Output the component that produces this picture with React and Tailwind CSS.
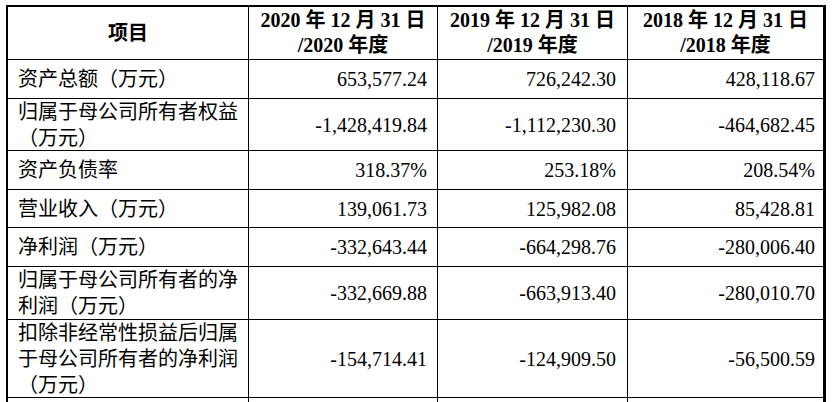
import React from "react";

const ROWS = [
  { label: ["资产总额（万元）"], h: "h-[39px]", values: ["653,577.24", "726,242.30", "428,118.67"] },
  { label: ["归属于母公司所有者权益", "（万元）"], h: "h-[52px]", values: ["-1,428,419.84", "-1,112,230.30", "-464,682.45"] },
  { label: ["资产负债率"], h: "h-[39px]", values: ["318.37%", "253.18%", "208.54%"] },
  { label: ["营业收入（万元）"], h: "h-[38px]", values: ["139,061.73", "125,982.08", "85,428.81"] },
  { label: ["净利润（万元）"], h: "h-[39px]", values: ["-332,643.44", "-664,298.76", "-280,006.40"] },
  { label: ["归属于母公司所有者的净", "利润（万元）"], h: "h-[53px]", values: ["-332,669.88", "-663,913.40", "-280,010.70"] },
  {
    label: ["扣除非经常性损益后归属", "于母公司所有者的净利润", "（万元）"],
    h: "h-[78px]",
    values: ["-154,714.41", "-124,909.50", "-56,500.59"],
  },
];

const YEARS = ["2020", "2019", "2018"];
const PAD = ["pr-[10px]", "pr-[11px]", "pr-[8px]"];

export default function App() {
  return (
    <div
      className="h-[402px] w-[832px] overflow-hidden bg-white pl-[6px] pt-[5px] text-[20px] text-black"
      style={{ fontFamily: "'Liberation Serif', 'Noto Sans CJK SC', serif" }}
    >
      <div className="w-[820px] border-l-2 border-r-[3px] border-t-2 border-black">
        {/* header */}
        <div className="grid h-[53px] grid-cols-[241px_189px_190px_195px] border-b border-black font-bold">
          <div className="flex items-center justify-center border-r border-black">项目</div>
          {YEARS.map((y, i) => (
            <div
              key={y}
              className={`flex flex-col items-center justify-center leading-[25px] ${
                i < 2 ? "border-r border-black" : ""
              }`}
            >
              <span>{y} 年 12 月 31 日</span>
              <span>/{y} 年度</span>
            </div>
          ))}
        </div>

        {ROWS.map((row, idx) => (
          <div key={idx} className={`grid ${row.h} grid-cols-[241px_189px_190px_195px] border-b border-black`}>
            <div className="flex flex-col justify-center border-r border-black pl-[10px] leading-[26px]">
              {row.label.map((line) => (
                <span key={line} className="whitespace-nowrap">
                  {line}
                </span>
              ))}
            </div>
            {row.values.map((v, i) => (
              <div
                key={i}
                className={`flex items-center justify-end ${PAD[i]} ${i < 2 ? "border-r border-black" : ""}`}
              >
                {v}
              </div>
            ))}
          </div>
        ))}

        {/* next row, cut off by the page edge */}
        <div className="grid h-[40px] grid-cols-[241px_189px_190px_195px]">
          <div className="border-r border-black" />
          <div className="border-r border-black" />
          <div className="border-r border-black" />
          <div />
        </div>
      </div>
    </div>
  );
}
